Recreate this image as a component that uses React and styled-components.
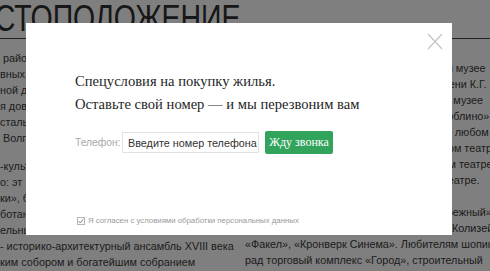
import React from "react";
import styled, { createGlobalStyle } from "styled-components";

const Global = createGlobalStyle`
  html, body { margin: 0; padding: 0; background: #fff; }
  body { width: 490px; height: 271px; overflow: hidden; }
`;

const Page = styled.div`
  position: relative;
  width: 490px;
  height: 271px;
  overflow: hidden;
  background: #fff;
  font-family: "Liberation Sans", Arial, sans-serif;
  color: #3a3a3a;
`;

const HeadingBar = styled.div`
  height: 38px;
  border-bottom: 1px solid #444;
  overflow: hidden;
`;

const Heading = styled.h1`
  margin: 0 0 0 -48px;
  font-family: "Liberation Sans", Arial, sans-serif;
  font-weight: 400;
  font-size: 37px;
  line-height: 36px;
  padding-top: 1px;
  color: #2f2f2f;
  white-space: nowrap;
  transform: scaleX(0.77);
  transform-origin: 0 0;
`;

const Columns = styled.div`
  display: grid;
  grid-template-columns: 235px 1fr;
  column-gap: 10px;
  padding-top: 10px;
`;

const Column = styled.div`
  display: flex;
  flex-direction: column;
  padding-top: ${(p) => p.$top || 0}px;
`;

const Line = styled.div`
  font-size: 10.8px;
  line-height: 16px;
  white-space: nowrap;
  margin-top: ${(p) => p.$gap || 0}px;
`;

const Overlay = styled.div`
  position: absolute;
  inset: 0;
  background: rgba(0, 0, 0, 0.5);
`;

const Modal = styled.div`
  position: absolute;
  left: 26px;
  top: 23px;
  width: 426px;
  height: 212px;
  box-sizing: border-box;
  background: #fff;
  padding: 47px 0 0 49px;
  display: flex;
  flex-direction: column;
`;

const Close = styled.button`
  position: absolute;
  right: 9px;
  top: 10px;
  width: 16px;
  height: 17px;
  padding: 0;
  border: 0;
  background: none;
  cursor: pointer;
  display: flex;
`;

const Title = styled.div`
  font-family: "Liberation Serif", "Times New Roman", serif;
  font-size: 14.6px;
  line-height: 23px;
  color: #1f1f1f;
`;

const Form = styled.form`
  display: flex;
  align-items: center;
  margin-top: 15px;
`;

const Label = styled.label`
  font-family: "Liberation Sans", Arial, sans-serif;
  font-size: 10.3px;
  color: #a8a8a8;
  width: 47px;
`;

const Input = styled.input`
  box-sizing: border-box;
  width: 137px;
  height: 21px;
  border: 1px solid #e2e2e2;
  padding: 0 0 0 5px;
  font-family: "Liberation Sans", Arial, sans-serif;
  font-size: 10.8px;
  color: #333;
  outline: none;
  &::placeholder { color: #333; opacity: 1; }
`;

const Button = styled.button`
  margin-left: 6px;
  width: 68px;
  height: 23px;
  border: 0;
  border-radius: 2px;
  background: #31a35b;
  color: #fff;
  font-family: "Liberation Serif", "Times New Roman", serif;
  font-size: 12px;
  padding: 0;
  cursor: pointer;
`;

const Consent = styled.label`
  margin-top: auto;
  margin-bottom: 10px;
  margin-left: 2px;
  display: flex;
  align-items: center;
  gap: 3px;
  font-family: "Liberation Sans", Arial, sans-serif;
  font-size: 7.8px;
  color: #9a9a9a;
`;

const Box = styled.span`
  width: 6px;
  height: 6px;
  border: 1px solid #b5b5b5;
  display: flex;
  align-items: center;
  justify-content: center;
`;

const left = ["\u00a0райо", "вных,", "ной д", "я дово", "стальн", "\u00a0Волго"];
const left2 = [
  "-культ", "о: эт", "ки», б", "ботан", "ельны",
  "- историко-архитектурный ансамбль XVIII века",
  "ким собором и богатейшим собранием",
];
const right = [
  "Есть возможность сходить и в областном музее",
  "собрание графики в Музее искусства имени К.Г.",
  "Сокурова, в литературно-мемориальном музее",
  "Гоголя, а также в старинной усадьбе «Люблино»",
  "Театралам стоит заглянуть хотя бы раз в любом",
  "из спектаклей в областном драматическом театре",
  "в музыкальном, оперном и в молодёжном театре в",
  "городе, а также и в Детском кукольном театре.",
];
const right2 = [
  "Кинотеатры: «Победа», «Киномир», «Рубежный»,",
  "«Маяковский», «Галактика», «Аврора», «Колизей»,",
  "«Факел», «Кронверк Синема». Любителям шопинга",
  "рад торговый комплекс «Город», строительный",
  "гипермаркет «Леруа Мерлен», мебельный центр",
];

export default function App() {
  return (
    <>
      <Global />
      <Page>
        <HeadingBar>
          <Heading>МЕСТОПОЛОЖЕНИЕ</Heading>
        </HeadingBar>
        <Columns>
          <Column $top={1}>
            {left.map((t, i) => <Line key={i}>{t}</Line>)}
            {left2.map((t, i) => <Line key={i} $gap={i === 0 ? 12 : 0}>{t}</Line>)}
          </Column>
          <Column $top={11}>
            {right.map((t, i) => <Line key={i}>{t}</Line>)}
            {right2.map((t, i) => <Line key={i} $gap={i === 0 ? 16 : 0}>{t}</Line>)}
          </Column>
        </Columns>
        <Overlay />
        <Modal>
          <Close aria-label="Закрыть">
            <svg width="16" height="17" viewBox="0 0 16 17">
              <path d="M1 1 L15 16 M15 1 L1 16" stroke="#c4c4c4" strokeWidth="1.2" fill="none" />
            </svg>
          </Close>
          <Title>Спецусловия на покупку жилья.</Title>
          <Title>Оставьте свой номер — и мы перезвоним вам</Title>
          <Form onSubmit={(e) => e.preventDefault()}>
            <Label>Телефон:</Label>
            <Input placeholder="Введите номер телефона" />
            <Button type="submit">Жду звонка</Button>
          </Form>
          <Consent>
            <Box>
              <svg width="6" height="6" viewBox="0 0 6 6">
                <path d="M0.5 3 L2.3 5 L5.5 0.8" stroke="#8a8a8a" strokeWidth="1" fill="none" />
              </svg>
            </Box>
            Я согласен с условиями обработки персональных данных
          </Consent>
        </Modal>
      </Page>
    </>
  );
}
